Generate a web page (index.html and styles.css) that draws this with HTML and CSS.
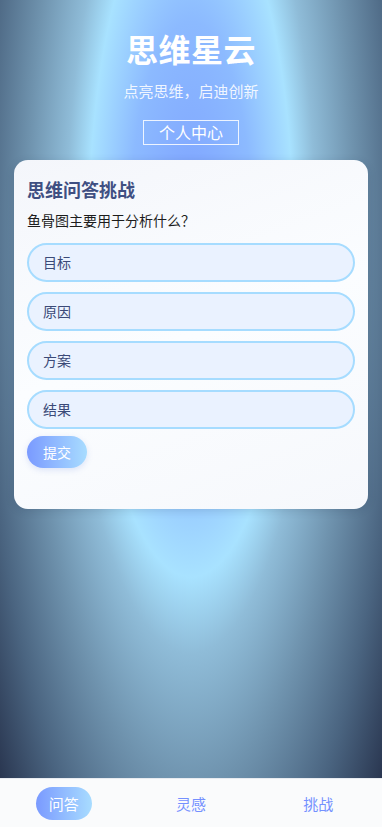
FILE: index.html
```html
<!doctype html>
<html>
  <head>
    <meta charset="UTF-8" />
    <link rel="stylesheet" href="styles.css">
  </head>
  <body>
    <div class="page">
      <div class="header">
        <div class="app-title">思维星云</div>
        <div class="app-slogan">点亮思维，启迪创新</div>
        <div class="profile-btn">个人中心</div>
      </div>
      <div class="card">
        <div class="card-title">思维问答挑战</div>
        <div class="question">鱼骨图主要用于分析什么？</div>
        <div class="options">
          <div class="option">目标</div>
          <div class="option">原因</div>
          <div class="option">方案</div>
          <div class="option">结果</div>
        </div>
        <div class="submit-btn">提交</div>
      </div>
    </div>
    <div class="nav">
      <div class="nav-item"><span class="nav-label active">问答</span></div>
      <div class="nav-item"><span class="nav-label">灵感</span></div>
      <div class="nav-item"><span class="nav-label">挑战</span></div>
    </div>
  </body>
</html>
```

FILE: styles.css
```css
html,
body {
  height: 100%;
}
body {
  margin: 0;
  overflow: hidden;
  display: flex;
  flex-direction: column;
  font-family: "Noto Sans CJK SC", "Noto Sans", sans-serif;
  background: radial-gradient(102px 347px at 50% 230px,
    #7ea2ff 0%,
    #8cbaff 60%,
    #a8e2ff 100%,
    #8fbcd8 122%,
    #6f93ae 160%,
    #4a6480 205%,
    #1c233c 262%);
}
.page {
  flex-grow: 1;
  padding: 0 14px;
}
.header {
  display: flex;
  flex-direction: column;
  align-items: center;
  padding-top: 27px;
}
.app-title {
  color: white;
  font-size: 32px;
  font-weight: bold;
  line-height: 42px;
  letter-spacing: 0.5px;
}
.app-slogan {
  color: rgba(255, 255, 255, 0.88);
  font-size: 15px;
  line-height: 22px;
  margin-top: 11px;
}
.profile-btn {
  border: 1px solid rgba(255, 255, 255, 0.85);
  color: white;
  font-size: 16px;
  line-height: 23px;
  margin-top: 18px;
  padding: 0 15px;
}
.card {
  background: linear-gradient(160deg, #f4f6fb 0%, #fbfdff 50%, #f6f8fc 100%);
  border-radius: 14px;
  box-shadow: 0 2px 8px rgba(30, 40, 70, 0.15);
  height: 349px;
  box-sizing: border-box;
  margin-top: 15px;
  padding: 16px 13px;
}
.card-title {
  color: #3f4f82;
  font-size: 18px;
  font-weight: bold;
  line-height: 26px;
}
.question {
  color: #1c1c1c;
  font-size: 14px;
  line-height: 20px;
  margin-top: 8px;
}
.options {
  display: flex;
  flex-direction: column;
  gap: 10px;
  margin-top: 13px;
}
.option {
  background: #eaf2ff;
  border: 2px solid #a6dcff;
  border-radius: 20px;
  color: #3b4a78;
  font-size: 14px;
  line-height: 35px;
  padding: 0 14px;
}
.submit-btn {
  display: inline-block;
  background: linear-gradient(90deg, #7a9aff, #a8dcff);
  border-radius: 16px;
  box-shadow: 0 2px 6px rgba(100, 130, 220, 0.2);
  color: white;
  font-size: 14px;
  line-height: 32px;
  margin-top: 7px;
  padding: 0 16px;
}
.nav {
  display: flex;
  height: 48px;
  align-items: center;
  background: #fafbfc;
  border-top: 1px solid #e8ebf0;
}
.nav-item {
  flex: 1;
  display: flex;
  justify-content: center;
}
.nav-label {
  color: #7490ff;
  font-size: 15px;
  line-height: 33px;
  padding: 0 13px;
  border-radius: 17px;
}
.nav-label.active {
  background: linear-gradient(90deg, #7a9aff, #a8dcff);
  color: white;
}
```
